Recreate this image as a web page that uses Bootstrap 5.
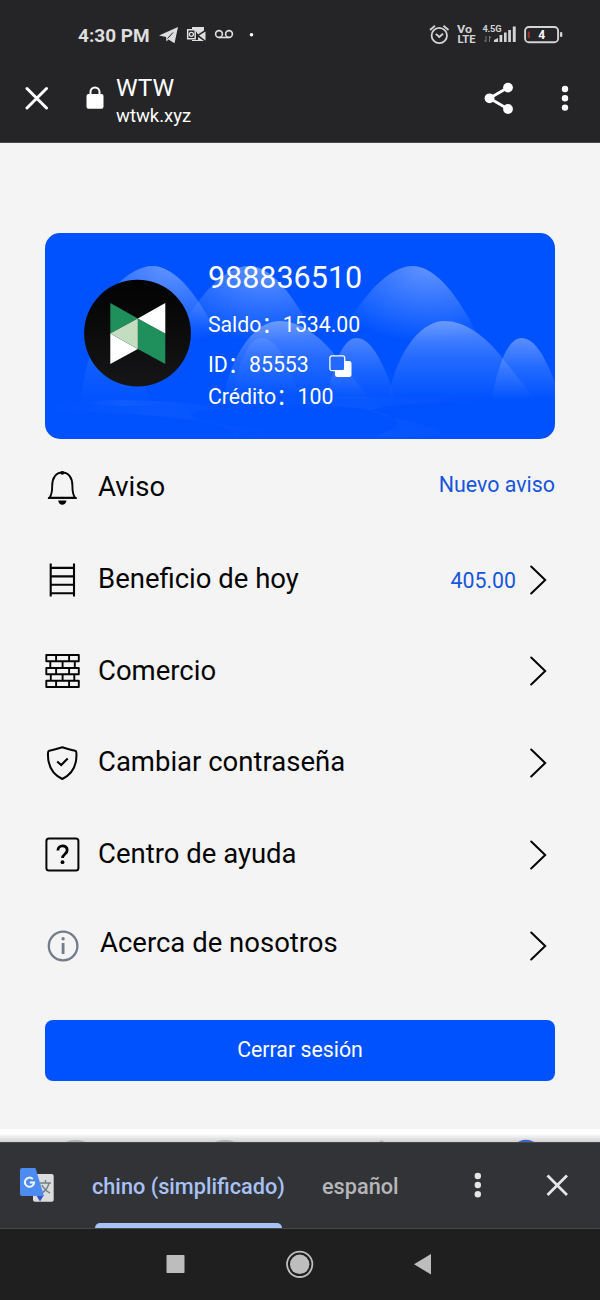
<!DOCTYPE html>
<html lang="es">
<head>
<meta charset="utf-8">
<meta name="viewport" content="width=device-width, initial-scale=1">
<title>WTW</title>
<link href="https://cdn.jsdelivr.net/npm/bootstrap@5.3.0/dist/css/bootstrap.min.css" rel="stylesheet">
<style>
body{font-family:Roboto,"Noto Sans CJK SC",sans-serif;background:#f4f4f4;color:#050505;width:600px;height:1300px;overflow:hidden}
svg{display:block;flex:none}
.top-area{background:#252527;height:143px;border-bottom:1px solid #49494b;color:#fff}
.status-row{height:70px;padding:0 37px 0 78px;color:#dedede}
.clock{font-size:19px;font-weight:700;line-height:24px;width:80px;padding-top:1px}
.address-row{height:56px;padding:0 28px 0 25px}
.site-title{margin-left:12px;padding-top:5px}
.site-name{font-size:24.4px;line-height:30px}
.site-host{font-size:18.5px;line-height:26px}
.screen{height:986px;padding:90px 45px 0}
.profile{height:206px;border-radius:15px;background:#0052ff;color:#fff;overflow:hidden;margin:0 0 3px .4px;padding-left:39px}
.profile .scene{position:absolute;left:0;top:0}
.facts{font-size:21.3px;margin-left:15.5px;white-space:nowrap}
.phone{font-size:30.5px;line-height:36px;margin-top:27px}
.saldo{line-height:28px;margin-top:15px}
.ident{line-height:28px;margin-top:12px}
.credit{line-height:28px;margin-top:4px}
.menu-row{height:91.7px;font-size:27.5px;line-height:34px}
.menu-icon{width:35px;margin-right:18px}
.menu-text{padding-bottom:1px}
.menu-text.last{padding:0 0 7px 2px}
.note{color:#1756dc;font-size:21.4px;padding-bottom:5px}
.gain{color:#1756dc;font-size:21.3px;margin-right:14px;line-height:28px;padding-top:2px}
.chev{margin-right:8px}
.logout{height:61px;border-radius:8px;background:#0052ff;border:0;color:#fff;font-size:21.3px;margin-top:28px;padding:0 0 2px}
.tab-peek{height:13px;background:linear-gradient(#fff 0,#fff 35%,#d0d0d0 100%)}
.translate-bar{height:87px;background:#323337;border-top:1px solid #47484b;border-bottom:1px solid #47484b;padding-left:19px}
.lang{height:85px;font-size:21.7px;font-weight:500;line-height:87px;color:#b6b7b9;white-space:nowrap}
.lang.on{color:#a8c2f5;width:193px;margin-left:37px}
.lang.on::after{content:"";position:absolute;left:3px;bottom:0;width:187px;height:5px;border-radius:5px 5px 0 0;background:#a8c2f5}
.lang.off{margin-left:37px;width:78px}
.system-nav{height:71px;background:#1f1f1f;padding:0 0 2px 166px}
</style>
</head>
<body>
<svg width="0" height="0" class="position-absolute"><symbol id="chevron" viewBox="0 0 17 30"><path d="m1.200 1.500 14 13.500-14 13.500" fill="none" stroke="#050505" stroke-width="2" stroke-linecap="round"/></symbol></svg>
<header class="top-area">
  <div class="status-row d-flex align-items-center">
    <div class="clock text-nowrap">4:30 PM</div>
    <svg width="100" height="24" viewBox="158 23 100 24" fill="#dedede">
      <path d="M159 35.500 178 27l-3.500 16.200-6-3.700-2 2-.5-4.500z"/><path d="m167.500 38.500 5.500-6" stroke="#252527" stroke-width="1"/>
      <path d="M192 27h12v3.500l-6 4-3-5h-3zM205.500 31.500v9l-6.500-5zM192 40h6v-3l6 4h-12z"/>
      <path fill="none" stroke="#dedede" stroke-width="1.500" d="M187.700 29.700h7.500v9h-7.500z"/>
      <circle cx="191.400" cy="34.300" r="2" fill="none" stroke="#dedede" stroke-width="1.300"/>
      <g fill="none" stroke="#dedede" stroke-width="1.600"><circle cx="219" cy="34" r="3.400"/><circle cx="229" cy="34" r="3.400"/><path d="M219 37.500h10"/></g>
      <circle cx="251.500" cy="34.700" r="1.800" fill="#fff"/>
    </svg>
    <svg class="ms-auto" width="136" height="24" viewBox="427 23 136 24" fill="#d4d4d4">
      <g fill="none" stroke="#d4d4d4" stroke-width="1.800"><circle cx="439.300" cy="35.500" r="7.700"/><path d="m435.800 33.800 3.500 3.200 3.700-3.200M430 30l5-4.200M443.500 25.800l5 4.200"/></g>
      <g font-family="Roboto" font-weight="700"><text x="457" y="33" font-size="10" textLength="15" lengthAdjust="spacingAndGlyphs">Vo</text><text x="457.500" y="42.800" font-size="10.500" textLength="18" lengthAdjust="spacingAndGlyphs">LTE</text><text x="482.500" y="32" font-size="9.300" textLength="19">4.5G</text><text x="538.200" y="39.200" font-size="12" fill="#fff">4</text></g>
      <g fill="none" stroke="#777" stroke-width="1"><path d="M486 36v6l-1.500-2M489.500 42v-6l1.500 2"/></g>
      <path d="M494 42v-2l4-2v4zM499.500 42v-7h2.800v7zM504 42v-9.500h2.600v9.500zM508.200 42v-12h2.700v12zM512.800 42v-15.500h2.900V42z"/>
      <rect x="525.100" y="27" width="33" height="15.200" rx="3.800" fill="none" stroke="#d4d4d4" stroke-width="1.900"/>
      <path d="M527.800 31.500h2v6.500h-2z" fill="#a22d2d"/><rect x="560" y="32" width="2.300" height="5" rx="1"/>
    </svg>
  </div>
  <div class="address-row d-flex align-items-center">
    <svg width="23" height="24" viewBox="25 86 23 24"><path d="m27 88.500 19.500 19.500M46.500 88.500 27 108" stroke="#fff" stroke-width="3" stroke-linecap="round"/></svg>
    <svg width="18" height="24" viewBox="86 86 18 24" style="margin-left:38px"><rect x="86.500" y="94" width="17" height="14.800" rx="2" fill="#fff"/><path d="M90.500 95v-3a4.500 4.500 0 0 1 9 0v3" stroke="#fff" stroke-width="2" fill="none"/></svg>
    <div class="site-title"><div class="site-name">WTW</div><div class="site-host">wtwk.xyz</div></div>
    <svg class="ms-auto" width="90" height="34" viewBox="482 81 90 34" fill="#fff"><path d="M508 87.500 489.500 98.300 508 109" fill="none" stroke="#fff" stroke-width="2.800"/><circle cx="508" cy="87.600" r="4.900"/><circle cx="489.500" cy="98.300" r="4.900"/><circle cx="508" cy="109" r="4.900"/><circle cx="565" cy="89" r="3.200"/><circle cx="565" cy="98.300" r="3.200"/><circle cx="565" cy="107.600" r="3.200"/></svg>
  </div>
</header>

<main class="screen">
  <section class="profile position-relative d-flex">
    <svg class="scene" width="510" height="206" viewBox="45.500 233 510 206">
      <defs>
        <linearGradient id="hill" x1="0" y1="0" x2="0" y2="1"><stop stop-color="#fff" stop-opacity=".35"/><stop offset=".5" stop-color="#fff" stop-opacity=".13"/><stop offset="1" stop-color="#fff" stop-opacity="0"/></linearGradient>
        <radialGradient id="tall" cx=".55" cy="0" r=".75"><stop stop-color="#fff" stop-opacity=".38"/><stop offset=".5" stop-color="#fff" stop-opacity=".19"/><stop offset="1" stop-color="#fff" stop-opacity="0"/></radialGradient>
        <linearGradient id="pool" x1="0" x2="1"><stop stop-color="#fff" stop-opacity="0"/><stop offset=".5" stop-color="#fff" stop-opacity=".035"/><stop offset="1" stop-color="#fff" stop-opacity="0"/></linearGradient>
        <path id="peak" d="M-68 62C-50 32-25 0 0 0c24 0 47 32 67 72 8 16 15 24 20 30H-68z"/>
        <path id="dome" d="M-54 66C-43 24-21 0 0 0c23 0 45 19 61 41 12 15 22 27 29 38H-54z"/>
        <path id="cone" d="M-30 62C-23 24-13 0 0 0c16 0 29 29 39 62z"/>
      </defs>
      <use href="#peak" x="153" y="266" fill="url(#tall)"/>
      <use href="#peak" x="249" y="266" fill="url(#tall)"/>
      <use href="#peak" x="413" y="266" fill="url(#tall)"/>
      <path d="M82 404c1-29 7-53 22-71 20 12 36 38 48 71z" fill="url(#hill)" opacity=".45"/>
      <use href="#dome" x="280" y="321" fill="url(#hill)"/>
      <use href="#dome" x="445" y="321" fill="url(#hill)"/>
      <use href="#cone" x="357" y="338" fill="url(#hill)" opacity=".85"/>
      <use href="#cone" x="262" y="338" fill="url(#hill)" opacity=".25"/>
      <use href="#cone" x="522" y="338" fill="url(#hill)"/>
      <g fill="url(#pool)"><path d="M45 404c58-7 137-4 188 5-56-1-56 13 18 18 31 3 31 8-17 10 7-13-54-24-189-26z"/><path d="M210 403c88-7 142-8 290-2-72 1-122 4-129 10 8 6 80 16 70 23-25 5-50 3-64 2 45-14 13-28-60-31z"/><ellipse cx="125" cy="403" rx="40" ry="3"/></g>
    </svg>
    <svg class="position-relative" width="108" height="108" viewBox="84.700 279 108 108" style="margin-top:46px">
      <defs><linearGradient id="disc" x1="0" y1="0" x2="0" y2="1"><stop stop-color="#020202"/><stop offset="1" stop-color="#161618"/></linearGradient></defs>
      <circle cx="138.200" cy="333.200" r="53.400" fill="url(#disc)"/>
      <path d="M111 303v30.500l27.500-15zM138.500 318.500 166 333.500V364l-27.500-15z" fill="#1f8f5c"/><path d="m166 303-27.500 15.500 27.500 15zM111 333.500V364l27.500-15z" fill="#fff"/><path d="m138.500 318.500-27.500 15 27.500 15.500z" fill="#c3ddc0"/>
    </svg>
    <div class="facts position-relative">
      <div class="phone">988836510</div>
      <div class="saldo">Saldo：1534.00</div>
      <div class="ident d-flex">ID：85553<svg width="23" height="23" viewBox="0 0 23 23" style="margin:4px 0 0 20px"><rect x="6" y="6" width="16.500" height="16" rx="2.500" fill="#fff"/><rect x=".9" y=".9" width="14.800" height="14.800" rx="2" fill="#2469ff" stroke="#fff" stroke-width="1.300"/></svg></div>
      <div class="credit">Crédito：100</div>
    </div>
  </section>

  <nav>
    <div class="menu-row d-flex align-items-center">
      <svg class="menu-icon" width="35" height="36" viewBox="45 469.500 35 36"><path d="M49.500 497.300c2.500-3 2.700-7 2.700-12 0-8 3.800-13.300 10.100-13.300s10.100 5.300 10.100 13.300c0 5 .2 9 2.700 12z" fill="none" stroke="#050505" stroke-width="1.900"/><circle cx="62.300" cy="472.300" r="1.900"/><path d="M58.100 500h8.400c-.7 5.700-7.700 5.700-8.400 0zM48 496.500h28.600v1.800H48z"/></svg>
      <span class="menu-text">Aviso</span><span class="note ms-auto">Nuevo aviso</span>
    </div>
    <div class="menu-row d-flex align-items-center">
      <svg class="menu-icon" width="35" height="36" viewBox="45 561.600 35 36"><path d="M50.700 563v33M74 563v33M50.700 567.500H74M50.700 576H74M50.700 584.300H74M50.700 592.800H74" stroke="#050505" stroke-width="2.100"/></svg>
      <span class="menu-text">Beneficio de hoy</span><span class="gain ms-auto">405.00</span>
      <svg class="chev" width="17" height="30"><use href="#chevron"/></svg>
    </div>
    <div class="menu-row d-flex align-items-center">
      <svg class="menu-icon" width="35" height="34" viewBox="-.3 0 35 34"><path d="M1 1h32.500v6.200H1zM1 14h32.500v6.200H1zM1 26.800h32.500V33H1zM5 7.200h24.500V14H5zM5.500 20.200h23.500v6.600H5.500zM10.800 1v6.200M23.800 1v6.200M17.300 7.200V14M10.800 14v6.200M23.800 14v6.200M17.300 20.200v6.600M10.800 26.800V33M23.800 26.800V33" fill="none" stroke="#050505" stroke-width="1.900" stroke-linejoin="round"/></svg>
      <span class="menu-text">Comercio</span>
      <svg class="chev ms-auto" width="17" height="30"><use href="#chevron"/></svg>
    </div>
    <div class="menu-row d-flex align-items-center">
      <svg class="menu-icon" width="35" height="34" viewBox="0 0 35 34"><path d="M17.300 1.200C13 2.500 8 4 4.200 4.800 3.200 5 3 6 3 7c-.5 12 4 21 14.300 26C27.500 28 32 19 31.400 7c0-1-.2-2-1.200-2.200C26.500 4 21.500 2.500 17.300 1.200z" fill="none" stroke="#050505" stroke-width="2"/><path d="m12.200 15.500 4 3.500 6.500-6.500" fill="none" stroke="#050505" stroke-width="2.100"/></svg>
      <span class="menu-text">Cambiar contraseña</span>
      <svg class="chev ms-auto" width="17" height="30"><use href="#chevron"/></svg>
    </div>
    <div class="menu-row d-flex align-items-center">
      <svg class="menu-icon" width="35" height="35" viewBox="-.2 -.2 35 35"><rect x="1.200" y="1.300" width="32" height="32" rx="2.500" fill="none" stroke="#050505" stroke-width="2"/><path d="M12.700 13.200c0-6 9.300-6 9.300-.3 0 4.300-4.700 4-4.700 8" fill="none" stroke="#050505" stroke-width="2.800"/><circle cx="17.300" cy="25" r="1.900"/></svg>
      <span class="menu-text">Centro de ayuda</span>
      <svg class="chev ms-auto" width="17" height="30"><use href="#chevron"/></svg>
    </div>
    <div class="menu-row d-flex align-items-center">
      <svg class="menu-icon" width="35" height="34" viewBox="0 0 35 34"><circle cx="18.100" cy="17" r="14.300" fill="none" stroke="#747c8c" stroke-width="2.300"/><path d="M18.100 14v11" stroke="#747c8c" stroke-width="2.800"/><circle cx="18.100" cy="9.800" r="1.700" fill="#747c8c"/></svg>
      <span class="menu-text last">Acerca de nosotros</span>
      <svg class="chev ms-auto" width="17" height="30"><use href="#chevron"/></svg>
    </div>
  </nav>
  <button class="btn logout w-100 d-block" type="button">Cerrar sesión</button>
</main>

<div class="tab-peek"><svg width="600" height="13" viewBox="0 0 600 13"><g fill="#aeb0b4"><ellipse cx="75.500" cy="14" rx="10" ry="3"/><ellipse cx="225" cy="14" rx="10" ry="3"/><circle cx="381.500" cy="14" r="2.500"/></g><ellipse cx="526" cy="14.500" rx="8.500" ry="3.700" fill="#3d66c8"/></svg></div>

<div class="translate-bar d-flex align-items-center">
  <svg width="36" height="36" viewBox="19 1168 36 36"><rect x="33" y="1174" width="20.700" height="27.700" rx="2" fill="#dcdcdc"/><path d="m36 1195 8 0-4 6.500z" fill="#3552c6"/><path d="M40 1183h11M45.500 1180v3M49 1183c-1 5-4 8-7 10M42 1185c2 4 4 6 8 8" fill="none" stroke="#6f8187" stroke-width="1.400"/><path d="M22 1168h13.500l8.500 28H22a2 2 0 0 1-2-2v-24a2 2 0 0 1 2-2z" fill="#4c8bf0"/><path d="M32.800 1179a4.600 4.600 0 1 0 1.300 3.500h-4.300" fill="none" stroke="#f4f7ff" stroke-width="2"/></svg>
  <div class="lang on position-relative">chino (simplificado)</div>
  <div class="lang off">español</div>
  <svg width="100" height="30" viewBox="470 1170 100 30" style="margin:0 0 2px 70px"><g fill="#e6e6e7"><circle cx="477.800" cy="1176" r="3.200"/><circle cx="477.800" cy="1185" r="3.200"/><circle cx="477.800" cy="1194.200" r="3.200"/></g><path d="m547.500 1175.500 19.500 19.500M567 1175.500 547.500 1195" stroke="#e6e6e7" stroke-width="2.700"/></svg>
</div>
<footer class="system-nav d-flex align-items-center">
  <svg width="268" height="30" viewBox="166 1249 268 30" fill="#bdbdbd"><rect x="166.500" y="1255" width="18" height="18" rx=".8"/><circle cx="299.700" cy="1264.300" r="12.700" fill="none" stroke="#bdbdbd" stroke-width="1.800"/><circle cx="299.700" cy="1264.300" r="9.700"/><path d="m414 1264.300 17-10.300v20.500z"/></svg>
</footer>
<script src="https://cdn.jsdelivr.net/npm/bootstrap@5.3.0/dist/js/bootstrap.bundle.min.js"></script>
</body>
</html>
